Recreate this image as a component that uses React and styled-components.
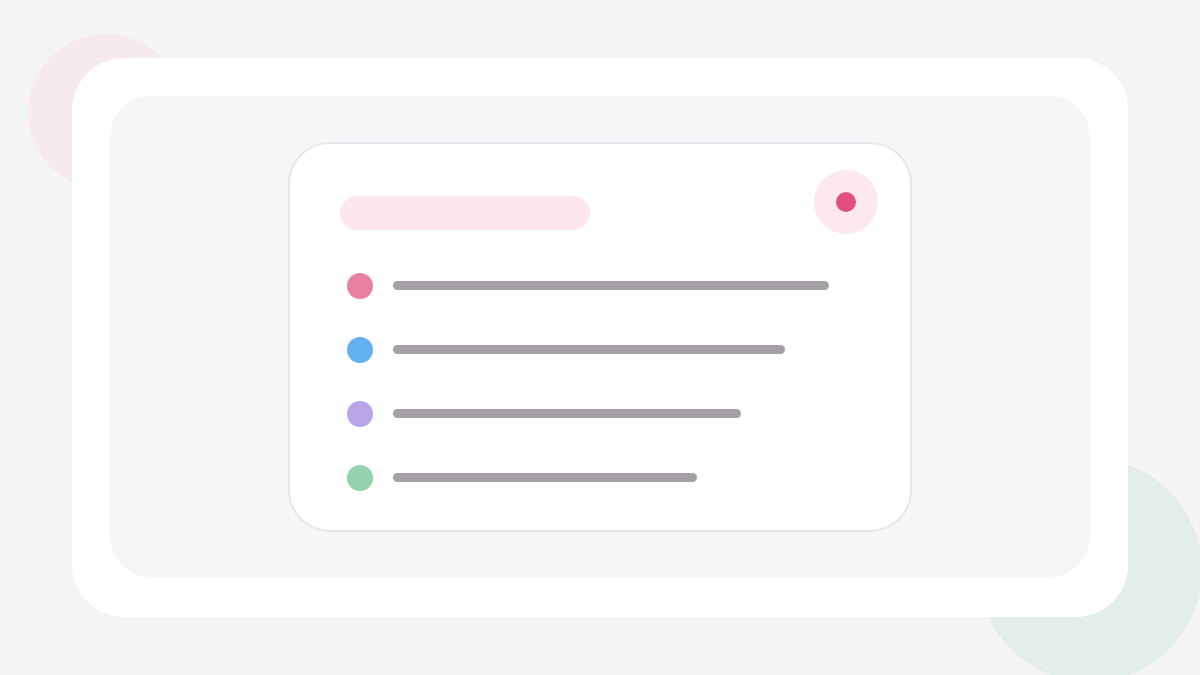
import React from "react";
import styled, { createGlobalStyle } from "styled-components";

const Global = createGlobalStyle`
  html, body { margin: 0; padding: 0; background: #f4f4f6; }
  * { box-sizing: border-box; }
  body { font-family: "Inter", "Liberation Sans", sans-serif; }
`;

const Stage = styled.div`
  position: relative;
  width: 1200px;
  height: 675px;
  overflow: hidden;
  background: #f4f4f6;
  display: flex;
  align-items: center;
  justify-content: center;
`;

const Blob = styled.div`
  position: absolute;
  left: ${(p) => p.$x}px;
  top: ${(p) => p.$y}px;
  width: ${(p) => p.$size}px;
  height: ${(p) => p.$size}px;
  border-radius: 50%;
  background: ${(p) => p.$color};
`;

const Frame = styled.div`
  position: relative;
  width: 1056px;
  height: 559px;
  padding: 38px 38px 40px;
  background: #ffffff;
  border-radius: 52px;
  display: flex;
`;

const Panel = styled.div`
  flex: 1;
  background: #f6f6f8;
  border-radius: 40px;
  display: flex;
  align-items: center;
  justify-content: center;
`;

const Card = styled.div`
  width: 624px;
  height: 390px;
  background: #ffffff;
  border: 2px solid #e7e7eb;
  border-radius: 42px;
  padding: 26px 32px 0 50px;
  display: flex;
  flex-direction: column;
`;

const Header = styled.div`
  display: flex;
  justify-content: space-between;
  align-items: flex-start;
`;

const TitlePill = styled.div`
  margin-top: 26px;
  width: 250px;
  height: 34px;
  border-radius: 17px;
  background: #fde6ee;
`;

const RecordButton = styled.div`
  width: 64px;
  height: 64px;
  border-radius: 50%;
  background: #fde8ef;
  display: flex;
  align-items: center;
  justify-content: center;
`;

const RecordDot = styled.div`
  width: 20px;
  height: 20px;
  border-radius: 50%;
  background: #e04f80;
`;

const List = styled.div`
  margin-top: 39px;
  padding-left: 7px;
  display: flex;
  flex-direction: column;
  gap: 38px;
`;

const Row = styled.div`
  display: flex;
  align-items: center;
  gap: 20px;
  height: 26px;
`;

const Dot = styled.div`
  width: 26px;
  height: 26px;
  border-radius: 50%;
  background: ${(p) => p.$color};
  flex-shrink: 0;
`;

const Bar = styled.div`
  height: 9px;
  border-radius: 4.5px;
  background: #a59fa6;
`;

const rows = [
  { color: "#e8809f", width: 436 },
  { color: "#63b0f2", width: 392 },
  { color: "#b8a6e8", width: 348 },
  { color: "#94d2ad", width: 304 },
];

export default function App() {
  return (
    <>
      <Global />
      <Stage>
        <Blob $x={28} $y={34} $size={156} $color="#f6e9ef" />
        <Blob $x={978} $y={458} $size={224} $color="#e3ede9" />
        <Frame>
          <Panel>
            <Card>
              <Header>
                <TitlePill />
                <RecordButton>
                  <RecordDot />
                </RecordButton>
              </Header>
              <List>
                {rows.map((r, i) => (
                  <Row key={i}>
                    <Dot $color={r.color} />
                    <Bar style={{ width: r.width }} />
                  </Row>
                ))}
              </List>
            </Card>
          </Panel>
        </Frame>
      </Stage>
    </>
  );
}
